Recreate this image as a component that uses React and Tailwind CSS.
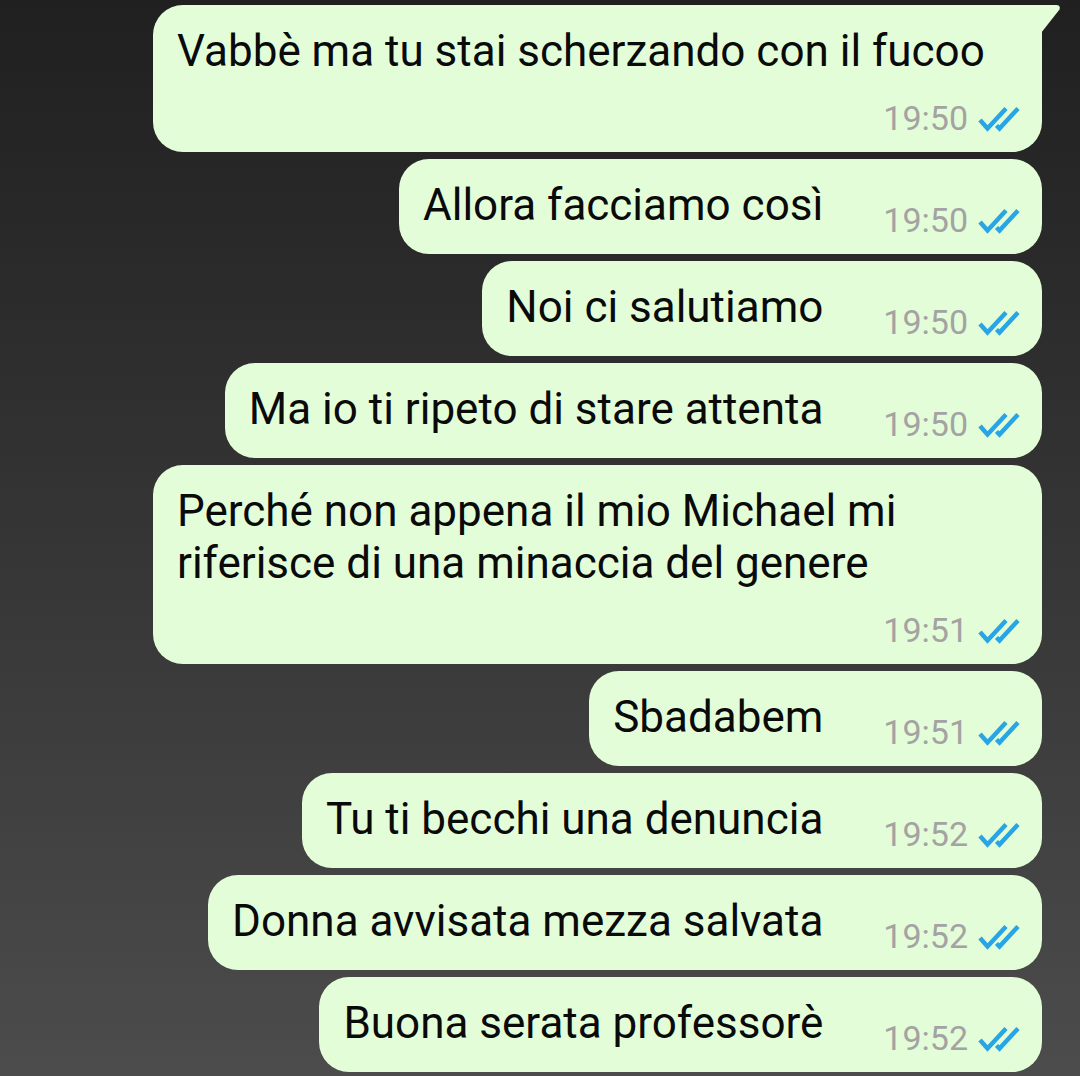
import React from 'react';

const messages = [
  { text: 'Vabbè ma tu stai scherzando con il fucoo', time: '19:50', first: true },
  { text: 'Allora facciamo così', time: '19:50' },
  { text: 'Noi ci salutiamo', time: '19:50' },
  { text: 'Ma io ti ripeto di stare attenta', time: '19:50' },
  { text: 'Perché non appena il mio Michael mi riferisce di una minaccia del genere', time: '19:51' },
  { text: 'Sbadabem', time: '19:51' },
  { text: 'Tu ti becchi una denuncia', time: '19:52' },
  { text: 'Donna avvisata mezza salvata', time: '19:52' },
  { text: 'Buona serata professorè', time: '19:52' },
];

function DoubleTick() {
  return (
    <svg width="42" height="28" viewBox="0 0 42 28" fill="none" className="shrink-0">
      <path d="M2 15 L9.5 23.5 L28 3.5" stroke="#27a5e4" strokeWidth="4.5" />
      <path d="M18.5 20.5 L21.5 23.5 L40 3.5" stroke="#27a5e4" strokeWidth="4.5" />
    </svg>
  );
}

function Bubble({ text, time, first }) {
  return (
    <div
      className={`relative max-w-[889px] bg-[#e4fdd9] pl-[24px] pr-[22px] pt-[20px] pb-[14px] ${
        first ? 'rounded-[30px] rounded-tr-none' : 'rounded-[30px]'
      }`}
    >
      {first && (
        <svg
          className="absolute top-0 right-[-19px]"
          width="20"
          height="30"
          viewBox="0 0 20 30"
        >
          <path d="M0 0 L15 0 Q20 0 18.5 4.5 L0 28 Z" fill="#e4fdd9" />
        </svg>
      )}
      <div className="flex flex-wrap items-end gap-x-[60px] gap-y-[13px]">
        <span className="max-w-full text-[44px] leading-[52px] text-[#0a0a0a] mb-[9px]">
          {text}
        </span>
        <div className="flex items-center gap-[10px] ml-auto">
          <span className="text-[34px] leading-[39px] text-[#a3a3a3]">{time}</span>
          <DoubleTick />
        </div>
      </div>
    </div>
  );
}

export default function App() {
  return (
    <div
      className="w-full h-[1076px] overflow-hidden bg-gradient-to-b from-[#202020] via-[#353535] to-[#4c4c4c]"
      style={{ fontFamily: 'Roboto, "Noto Sans", sans-serif' }}
    >
      <div className="flex flex-col items-end gap-[7px] pt-[5px] pr-[38px]">
        {messages.map((m, i) => (
          <Bubble key={i} {...m} />
        ))}
      </div>
    </div>
  );
}
